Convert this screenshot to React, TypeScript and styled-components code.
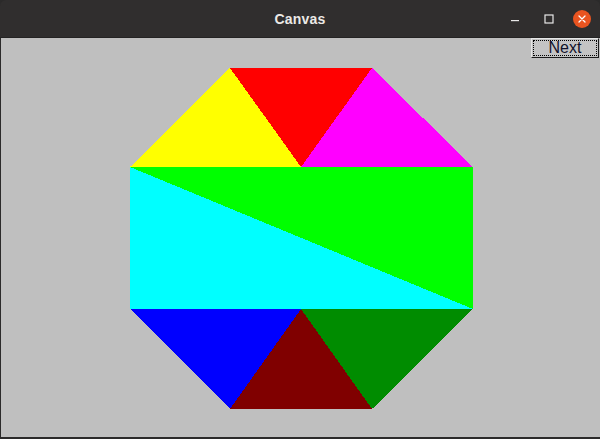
import React from "react";
import styled, { createGlobalStyle } from "styled-components";

const Global = createGlobalStyle`
  html, body { margin: 0; padding: 0; background: #2b2a2a; }
  body { width: 600px; height: 439px; overflow: hidden; }
`;

const Window = styled.div`
  width: 600px;
  height: 439px;
  display: flex;
  flex-direction: column;
  background: #2b2a2a;
  font-family: "Liberation Sans", Arial, sans-serif;
`;

const TitleBar = styled.div`
  flex: none;
  background: #302e2e;
  border-radius: 6px 6px 0 0;
  border-bottom: 1px solid #242323;
  display: grid;
  grid-template-columns: 1fr auto 1fr;
  align-items: center;
  padding-top: 1px;
  box-sizing: border-box;
  height: 38px;
`;

const Title = styled.div`
  grid-column: 2;
  color: #ebe9e6;
  font-weight: bold;
  font-size: 14px;
  letter-spacing: 0.2px;
`;

const Controls = styled.div`
  grid-column: 3;
  justify-self: end;
  display: flex;
  align-items: center;
  padding-right: 9px;
`;

const CtrlBtn = styled.div`
  width: 34px;
  height: 20px;
  display: flex;
  align-items: center;
  justify-content: center;
`;

const CloseCircle = styled.div`
  width: 18px;
  height: 18px;
  margin-left: 7px;
  border-radius: 50%;
  background: #e95420;
  display: flex;
  align-items: center;
  justify-content: center;
`;

const Client = styled.div`
  flex: 1;
  display: flex;
  flex-direction: column;
  background: #bfbfbf;
  border-left: 1px solid #2b2a2a;
  border-bottom: 2px solid #2b2a2a;
`;

const ButtonRow = styled.div`
  height: 20px;
  flex: none;
  display: flex;
  justify-content: flex-end;
  padding-right: 1px;
`;

const NextButton = styled.button`
  width: 68px;
  height: 20px;
  box-sizing: border-box;
  margin: 0;
  padding: 0 0 1px;
  background: #c4c4c4;
  border: 1px solid;
  border-color: #e6e6e6 #1a1a1a #1a1a1a #e6e6e6;
  outline: 1px dotted #000;
  outline-offset: -3px;
  font-family: "Liberation Sans", Arial, sans-serif;
  font-size: 16px;
  line-height: 17px;
  color: #12122a;
  text-align: center;
`;

const Canvas = styled.svg`
  display: block;
  flex: 1;
  width: 599px;
`;

type Tri = { pts: string; fill: string };

const tris: Tri[] = [
  { pts: "130,167 230,68 301,167", fill: "#ffff00" },
  { pts: "230,68 372,68 301,167", fill: "#ff0000" },
  { pts: "372,68 473,167 301,167", fill: "#ff00ff" },
  { pts: "130,167 473,167 473,309", fill: "#00ff00" },
  { pts: "130,167 473,309 130,309", fill: "#00ffff" },
  { pts: "130,309 301,309 230,409", fill: "#0000ff" },
  { pts: "301,309 230,409 372,409", fill: "#800000" },
  { pts: "301,309 473,309 372,409", fill: "#008c00" },
];

export default function App() {
  return (
    <>
      <Global />
      <Window>
        <TitleBar>
          <Title>Canvas</Title>
          <Controls>
            <CtrlBtn>
              <svg width="10" height="10" viewBox="0 0 10 10">
                <rect x="1" y="6" width="8" height="1.2" fill="#e8e8e8" />
              </svg>
            </CtrlBtn>
            <CtrlBtn>
              <svg width="10" height="10" viewBox="0 0 10 10">
                <rect x="1" y="1" width="8" height="8" fill="none" stroke="#e8e8e8" strokeWidth="1.2" />
              </svg>
            </CtrlBtn>
            <CloseCircle>
              <svg width="10" height="10" viewBox="0 0 10 10">
                <path d="M2 2 L8 8 M8 2 L2 8" stroke="#fff" strokeWidth="1.3" strokeLinecap="round" />
              </svg>
            </CloseCircle>
          </Controls>
        </TitleBar>
        <Client>
          <ButtonRow>
            <NextButton>Next</NextButton>
          </ButtonRow>
          <Canvas viewBox="1 58 599 379" preserveAspectRatio="xMinYMin slice" shapeRendering="crispEdges">
            {tris.map((t, i) => (
              <polygon key={i} points={t.pts} fill={t.fill} />
            ))}
          </Canvas>
        </Client>
      </Window>
    </>
  );
}
